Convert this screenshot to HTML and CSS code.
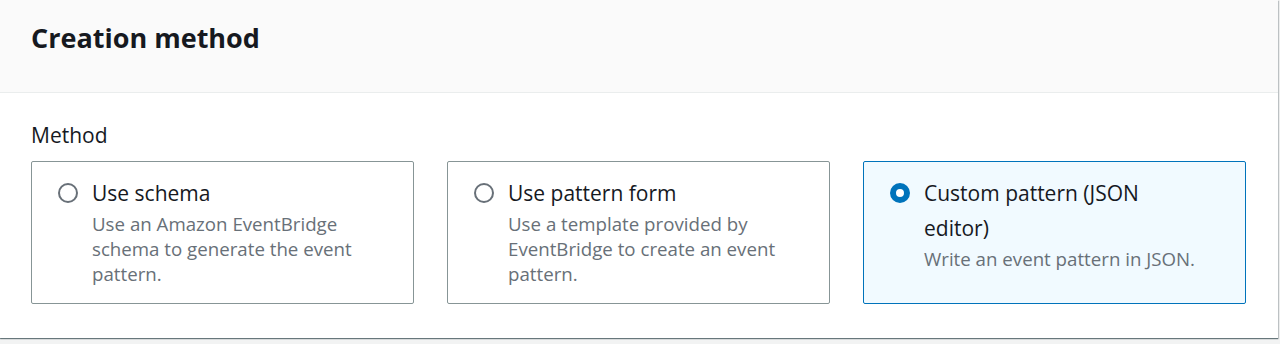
FILE: index.html
```html
<!DOCTYPE html>
<html lang="en">
<head>
<meta charset="utf-8">
<title>Creation method</title>
<link rel="stylesheet" href="styles.css">
</head>
<body>
<div class="panel">
  <div class="panel-header">
    <h2 class="panel-title">Creation method</h2>
  </div>
  <div class="panel-body">
    <div class="field-label">Method</div>
    <div class="tiles">
      <label class="tile">
        <span class="radio"></span>
        <span class="tile-text">
          <span class="tile-title">Use schema</span>
          <span class="tile-desc">Use an Amazon EventBridge schema to generate the event pattern.</span>
        </span>
      </label>
      <label class="tile">
        <span class="radio"></span>
        <span class="tile-text">
          <span class="tile-title">Use pattern form</span>
          <span class="tile-desc">Use a template provided by EventBridge to create an event pattern.</span>
        </span>
      </label>
      <label class="tile tile-selected">
        <span class="radio radio-checked"></span>
        <span class="tile-text">
          <span class="tile-title">Custom pattern (JSON editor)</span>
          <span class="tile-desc">Write an event pattern in JSON.</span>
        </span>
      </label>
    </div>
  </div>
</div>
</body>
</html>
```
FILE: styles.css
```css
* { box-sizing: border-box; }
html, body { margin: 0; padding: 0; }
body {
  background: #f2f3f3;
  font-family: "Open Sans", "Noto Sans", sans-serif;
  color: #16191f;
  width: 1280px;
  height: 344px;
  overflow: hidden;
}
.panel {
  width: 1278px;
  height: 338px;
  background: #ffffff;
  box-shadow: 0 1px 1px 0 rgba(0, 28, 36, 0.5), 1px 1px 1px 0 rgba(0, 28, 36, 0.15);
}
.panel-header {
  height: 93px;
  background: #fafafa;
  border-bottom: 1px solid #eaeded;
  padding: 0 31px;
  display: flex;
  align-items: center;
}
.panel-title {
  margin: 0;
  font-size: 27px;
  font-weight: 700;
  line-height: 34px;
  color: #16191f;
  position: relative;
  top: -8px;
}
.panel-body {
  padding: 28px 33px 0 31px;
}
.field-label {
  font-size: 21px;
  line-height: 28px;
  color: #16191f;
  margin-bottom: 12px;
}
.tiles {
  display: grid;
  grid-template-columns: 383px 383px 383px;
  column-gap: 33px;
}
.tile {
  display: flex;
  align-items: flex-start;
  border: 1px solid #879596;
  border-radius: 2px;
  padding: 14px 36px 17px 26px;
  height: 143px;
  background: #ffffff;
}
.tile-selected {
  border-color: #0073bb;
  background: #f1faff;
}
.radio {
  flex: none;
  width: 20px;
  height: 20px;
  border-radius: 50%;
  border: 2px solid #687078;
  background: #ffffff;
  margin-top: 7px;
  margin-right: 14px;
}
.radio-checked {
  border: 6px solid #0073bb;
}
.tile-text {
  display: flex;
  flex-direction: column;
}
.tile-title {
  font-size: 21px;
  line-height: 35px;
  color: #16191f;
}
.tile-desc {
  font-size: 18.7px;
  line-height: 25px;
  color: #687078;
}
```
